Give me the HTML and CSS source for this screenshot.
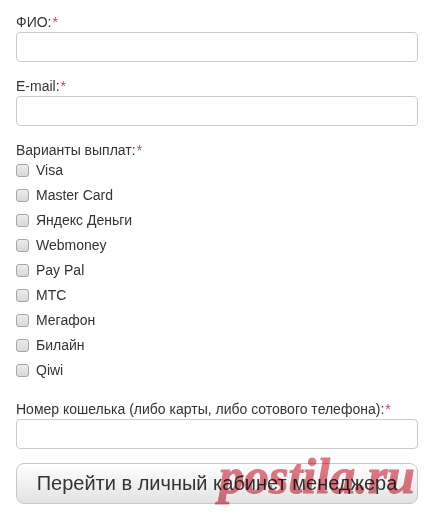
FILE: index.html
```html
<!DOCTYPE html>
<html lang="ru">

<head>
  <meta charset="UTF-8">
  <meta name="viewport" content="width=device-width, initial-scale=1.0">
  <title>Регистрация менеджера</title>
  <link rel="stylesheet" href="styles.css">
</head>

<body>
  <form id="manager-form">
    <div class="field">
      <label class="field-label">ФИО:<span class="req">*</span></label>
      <input type="text" class="text-input" />
    </div>

    <div class="field">
      <label class="field-label">E-mail:<span class="req">*</span></label>
      <input type="text" class="text-input" />
    </div>

    <div class="field">
      <label class="field-label">Варианты выплат:<span class="req">*</span></label>
      <ul class="options">
        <li><label><input type="checkbox" /> Visa</label></li>
        <li><label><input type="checkbox" /> Master Card</label></li>
        <li><label><input type="checkbox" /> Яндекс Деньги</label></li>
        <li><label><input type="checkbox" /> Webmoney</label></li>
        <li><label><input type="checkbox" /> Pay Pal</label></li>
        <li><label><input type="checkbox" /> МТС</label></li>
        <li><label><input type="checkbox" /> Мегафон</label></li>
        <li><label><input type="checkbox" /> Билайн</label></li>
        <li><label><input type="checkbox" /> Qiwi</label></li>
      </ul>
    </div>

    <div class="field">
      <label class="field-label">Номер кошелька (либо карты, либо сотового телефона):<span class="req">*</span></label>
      <input type="text" class="text-input" />
    </div>

    <button type="button" class="submit-btn">Перейти в личный кабинет менеджера</button>
  </form>

  <div class="watermark">postila.ru</div>
</body>

</html>
```

FILE: styles.css
```css
body {
  margin: 0;
  font-family: "Liberation Sans", Arial, Helvetica, sans-serif;
  font-size: 14px;
  color: #333;
  position: relative;
  min-height: 519px;
}

#manager-form {
  width: 402px;
  padding: 12px 0 0 16px;
}

.field {
  margin-bottom: 14px;
}

.field-label {
  display: block;
  line-height: 20px;
}

.req {
  color: #d23a5a;
  margin-left: 1px;
}

.text-input {
  display: block;
  box-sizing: border-box;
  width: 402px;
  height: 30px;
  margin: 0;
  border: 1px solid #ccc;
  border-radius: 4px;
  background: #fff;
}

.options {
  list-style: none;
  margin: -2px 0 0;
  padding: 0 0 2px;
}

.options li {
  line-height: 25px;
  height: 25px;
}

.options label {
  display: flex;
  align-items: center;
  gap: 7px;
}

.options input {
  appearance: none;
  width: 13px;
  height: 13px;
  margin: 0;
  border: 1px solid #a6a6a6;
  border-radius: 3px;
  background: linear-gradient(#ececec, #d8d8d8);
}

.submit-btn {
  display: block;
  box-sizing: border-box;
  width: 402px;
  height: 41px;
  margin: 0;
  padding: 0;
  font-family: "Liberation Sans", Arial, Helvetica, sans-serif;
  font-size: 20px;
  color: #333;
  border: 1px solid #c8c8c8;
  border-radius: 8px;
  background: linear-gradient(#ffffff, #e2e2e2);
}

.watermark {
  position: absolute;
  left: 219px;
  top: 451px;
  font-family: "Liberation Serif", "Times New Roman", serif;
  font-weight: bold;
  font-style: italic;
  font-size: 50px;
  line-height: 50px;
  color: #e07884;
  -webkit-text-stroke: 1px #e07884;
  mix-blend-mode: multiply;
  pointer-events: none;
}
```
